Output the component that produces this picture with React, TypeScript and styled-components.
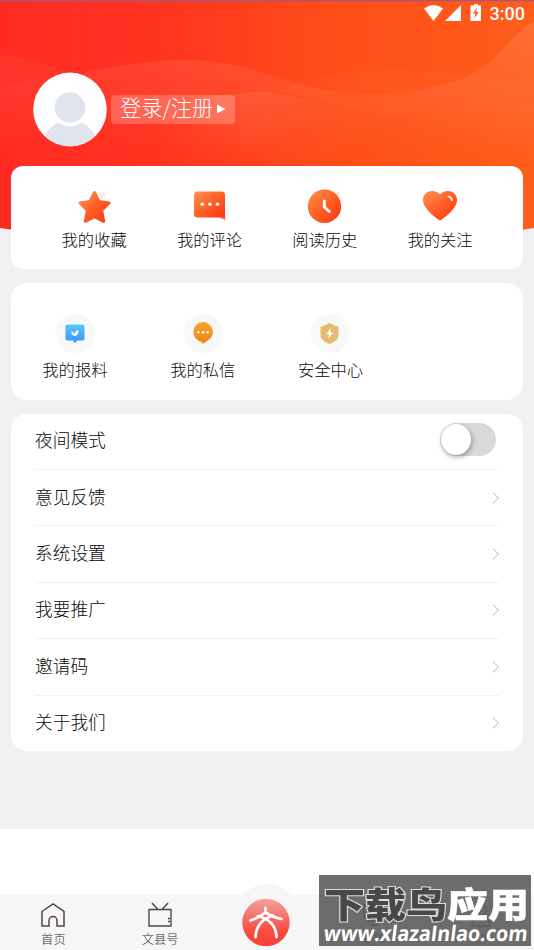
import React from "react";
import styled, { createGlobalStyle } from "styled-components";

const Global = createGlobalStyle`
  * { box-sizing: border-box; }
  body { margin: 0; background: #f1f1f1; font-family: "Noto Sans CJK SC", sans-serif; font-weight: 300; color: #080808; }
`;

const Screen = styled.div`
  position: relative;
  isolation: isolate;
  width: 534px;
  height: 950px;
  overflow: hidden;
  display: flex;
  flex-direction: column;
  background: #f1f1f1;
`;

const HeaderArt = styled.svg`
  position: absolute;
  top: 0;
  left: 0;
  z-index: -1;
`;

const StatusBar = styled.div`
  flex: none;
  height: 28px;
  padding-right: 9px;
  display: flex;
  align-items: center;
  justify-content: flex-end;
  color: #fff;
  font: 500 18px/28px Roboto, sans-serif;
`;

const StatusIcons = styled.svg`
  margin: 0 8px 2px 0;
`;

const Profile = styled.div`
  flex: none;
  height: 138px;
  padding: 44px 0 0 33px;
  display: flex;
  gap: 4px;
  align-items: flex-start;
`;

const LoginButton = styled.button`
  margin: 23px 0 0;
  width: 124px;
  height: 29px;
  border: 0;
  border-radius: 4px;
  padding: 0 0 5px 9px;
  display: flex;
  align-items: center;
  gap: 4px;
  background: rgba(255, 255, 255, 0.22);
  color: #fff;
  font: 300 21.2px/24px "Noto Sans CJK SC", sans-serif;
  white-space: nowrap;
  svg { margin-top: 4px; }
`;

const Card = styled.section<{ $height: number; $gap: number; $radius: number }>`
  flex: none;
  height: ${(p) => p.$height}px;
  margin: 0 11px ${(p) => p.$gap}px;
  border-radius: ${(p) => p.$radius}px;
  background: #fff;
`;

const Shortcuts = styled.div<{ $cell: number; $top: number; $left: number; $icon: number }>`
  display: grid;
  grid-auto-flow: column;
  grid-auto-columns: ${(p) => p.$cell}px;
  grid-template-rows: ${(p) => p.$icon}px 24px;
  padding: ${(p) => p.$top}px 0 0 ${(p) => p.$left}px;
  justify-items: center;
`;

const Shortcut = styled.div`
  display: grid;
  grid-row: span 2;
  grid-template-rows: subgrid;
  justify-items: center;
  font-size: 16.3px;
  line-height: 24px;
  white-space: nowrap;
`;

const MenuRow = styled.div`
  height: 56.4px;
  margin: 0 24px;
  padding-bottom: 4px;
  display: flex;
  align-items: center;
  justify-content: space-between;
  font-size: 17.7px;
  &:first-child { height: 55.5px; }
  & + & { border-top: 1px solid #f0f0f0; }
`;

const Toggle = styled.span`
  width: 56px;
  height: 33px;
  margin: 1px 3px 0 0;
  padding: 1px;
  border-radius: 17px;
  background: #d9d9d9;
`;

const Knob = styled.span`
  display: block;
  width: 30px;
  height: 31px;
  border-radius: 50%;
  background: #fff;
  box-shadow: 1px 2px 5px rgba(0, 0, 0, 0.35);
`;

const Chevron = styled.svg`
  margin: 4px -1px 0 0;
`;

const Footer = styled.footer`
  flex: none;
  margin-top: auto;
  height: 121px;
  padding-top: 66px;
  background: #fff;
`;

const TabBar = styled.nav`
  height: 55px;
  display: grid;
  grid-template-columns: repeat(5, 1fr);
  background: #f6f6f6;
`;

const Tab = styled.div<{ $active?: boolean }>`
  display: flex;
  flex-direction: column;
  align-items: center;
  padding-top: 6px;
  color: ${(p) => (p.$active ? "#d33a3a" : "#333")};
  font-size: 12.3px;
  line-height: 17px;
  svg { margin-bottom: 2px; }
`;

const CenterTab = styled.div`
  width: 64px;
  height: 66px;
  margin: -11px auto 0;
  border-radius: 32px 32px 0 0;
  background: #f6f6f6;
  display: flex;
  justify-content: center;
  align-items: flex-start;
  padding: 14px 2px 0 0;
  svg { flex: none; }
`;

const Watermark = styled.aside`
  position: absolute;
  left: 319px;
  top: 875px;
  width: 212px;
  height: 71px;
  padding: 7px 0 0 5px;
  background: rgba(91, 91, 91, 0.89);
  color: #fff;
  white-space: nowrap;
`;

const Brand = styled.div`
  height: 41px;
  font: 900 41px/41px "Noto Sans CJK SC", sans-serif;
  transform: scaleY(0.87);
  -webkit-text-stroke: 0.5px #fff;
`;

const DarkBrand = styled.span`
  color: #484848;
  -webkit-text-stroke: 2.5px #ddd;
  paint-order: stroke fill;
`;

const Site = styled.div`
  width: max-content;
  font: 700 19.7px/20px "Open Sans", sans-serif;
  transform: skewX(-7deg) scaleY(1.08);
`;

const grad = "url(#flame)";

const Flame = () => (
  <defs>
    <linearGradient id="flame" x1="0" y1="0" x2="1" y2="1">
      <stop offset="0" stopColor="#ff914f" />
      <stop offset=".55" stopColor="#ff5a22" />
      <stop offset="1" stopColor="#ff3412" />
    </linearGradient>
  </defs>
);

const StarIcon = () => (
  <svg width="40" height="40" viewBox="0 0 40 40">
    <Flame />
    <circle cx="28.500" cy="9" r="3" fill="#ffd6c6" opacity=".5" />
    <path d="M20.500 6.500l4.500 9 10 1.500-7.300 7.200 2 11.100-9.200-4.600-9.200 4.600 2-11.100L6 17l10-1.500z" fill={grad} stroke={grad} strokeWidth="3" strokeLinejoin="round" />
  </svg>
);
const CommentIcon = () => (
  <svg width="40" height="40" viewBox="0 0 40 40">
    <path d="M30 31h6.500v4z" fill="#ffa58c" />
    <path d="M8.500 5.500h24q3.500 0 3.500 3.500v23.500l-4-1H8.500Q5 31.500 5 28V9q0-3.500 3.500-3.500z" fill={grad} />
    <g fill="#fff"><circle cx="13.300" cy="18.200" r="1.800" /><circle cx="21" cy="18.200" r="1.800" /><circle cx="28.500" cy="18.200" r="1.800" /></g>
  </svg>
);
const ClockIcon = () => (
  <svg width="40" height="40" viewBox="0 0 40 40">
    <circle cx="33" cy="8" r="2" fill="#ffe0d3" />
    <circle cx="19.500" cy="20.300" r="16.700" fill={grad} />
    <path d="M19.300 15v6l5 4.500" fill="none" stroke="#fff" strokeWidth="3" strokeLinecap="round" strokeLinejoin="round" />
  </svg>
);
const HeartIcon = () => (
  <svg width="40" height="40" viewBox="0 0 40 40">
    <path d="M20 34.500C13 30 3 22 3 14 3 4.500 14.500 2 20 8.500 25.500 2 37 4.500 37 14 37 22 27 30 20 34.500z" fill={grad} />
    <path d="M28.500 10.500q3 .8 3.500 3.500" fill="none" stroke="#fff" strokeWidth="1.800" strokeLinecap="round" />
  </svg>
);

const ReportIcon = () => (
  <svg width="40" height="40" viewBox="0 0 40 40">
    <defs><linearGradient id="sky" x2="0" y2="1"><stop stopColor="#59c6ff" /><stop offset="1" stopColor="#3b91fb" /></linearGradient></defs>
    <circle cx="20" cy="19.500" r="19.500" fill="#f8f8f8" />
    <path d="M12.500 10.500h15q2 0 2 2v12q0 2-2 2H22l-2 2.700-2-2.700h-5.500q-2 0-2-2v-12q0-2 2-2z" fill="url(#sky)" />
    <path d="M19.500 22c-2-.5-3.300-2-3.200-4.500 2 .2 3.200 1.500 3.200 4.500zM19.500 22c-.2-3 1-5.500 3.800-6 .8 3-.8 5.800-3.800 6z" fill="#fff" />
  </svg>
);
const MessageIcon = () => (
  <svg width="40" height="40" viewBox="0 0 40 40">
    <defs><linearGradient id="amber" x2="0" y2="1"><stop stopColor="#f5a42c" /><stop offset="1" stopColor="#ee8410" /></linearGradient></defs>
    <circle cx="20" cy="19.500" r="19.500" fill="#f8f8f8" />
    <path d="M20 8a10 10 0 0 1 3.500 19.300L19.700 30l-.7-2.100A10 10 0 0 1 20 8z" fill="url(#amber)" />
    <g fill="#fff"><circle cx="15.300" cy="18.200" r="1.200" /><circle cx="20" cy="18.200" r="1.200" /><circle cx="24.700" cy="18.200" r="1.200" /></g>
  </svg>
);
const ShieldIcon = () => (
  <svg width="40" height="40" viewBox="0 0 40 40">
    <circle cx="20" cy="19.500" r="19.500" fill="#f8f8f8" />
    <path d="M19.500 9l9 4v8.500c0 4-4.500 6.500-9 8.500-4.500-2-9-4.500-9-8.500V13z" fill="#e5bd70" />
    <path d="M20.500 14l-4 6.200H19l-.7 4.800 4.700-6.500h-2.600z" fill="#fff" />
  </svg>
);

const mainShortcuts = [
  ["我的收藏", StarIcon], ["我的评论", CommentIcon], ["阅读历史", ClockIcon], ["我的关注", HeartIcon],
] as const;
const extraShortcuts = [
  ["我的报料", ReportIcon], ["我的私信", MessageIcon], ["安全中心", ShieldIcon],
] as const;
const menu = ["意见反馈", "系统设置", "我要推广", "邀请码", "关于我们"];

export default function App() {
  return (
    <Screen>
      <Global />
      <HeaderArt width="534" height="250" viewBox="0 0 534 250">
        <defs>
          <linearGradient id="sunset"><stop stopColor="#ff2b23" /><stop offset=".28" stopColor="#ff331f" /><stop offset=".65" stopColor="#ff4f18" /><stop offset="1" stopColor="#ff5d1b" /></linearGradient>
          <linearGradient id="wave" x2="0" y2="1"><stop stopColor="#fff" stopOpacity=".11" /><stop offset="1" stopColor="#fff" stopOpacity="0" /></linearGradient>
          <linearGradient id="crest"><stop stopColor="#ff6a50" stopOpacity="0" /><stop offset=".25" stopColor="#ff6a50" stopOpacity=".5" /><stop offset=".6" stopColor="#ff6a35" stopOpacity=".1" /><stop offset="1" stopColor="#ff7a45" stopOpacity=".35" /></linearGradient>
          <linearGradient id="fade" x2="0" y2="1"><stop stopColor="#fff" /><stop offset="1" stopColor="#000" /></linearGradient>
          <mask id="soften" maskUnits="userSpaceOnUse" x="150" y="85" width="384" height="85"><rect x="150" y="85" width="384" height="80" fill="url(#fade)" /></mask>
        </defs>
        <path d="M0 0h534v228q-267 40-534 0z" fill="url(#sunset)" />
        <path d="M0 86C70 80 120 60 184 60c55 0 80 15 130 28 50 10 105 8 150-10C500 62 505 38 534 22V150H0z" fill="url(#wave)" />
        <path d="M0 55q45 4 70 20Q40 84 0 86z" fill="#fff" opacity=".04" />
        <path d="M150 110Q215 92 268 92c50 7 90 27 150 27 55 0 80-8 116-17v68H150z" fill="url(#crest)" mask="url(#soften)" />
        <path d="M300 82q50-14 105-12 70 6 129 11v20q-50 17-116 17C360 118 320 97 280 92z" fill="#fff" opacity=".025" />
        <rect width="534" height="1.300" fill="#a95778" />
      </HeaderArt>

      <StatusBar>
        <StatusIcons width="58" height="18" viewBox="0 0 58 18" fill="#fff">
          <path d="M0 4.500Q9.500-2.500 19 4.500L9.500 17z" />
          <path d="M37 1v16H21z" />
          <path fillRule="evenodd" d="M50 0h4v1.500h3V17H46.500V1.500H50zM53 3.500l-4 6h2.300l-.8 5 4.200-6.500h-2.500z" />
        </StatusIcons>
        3:00
      </StatusBar>

      <Profile>
        <svg width="74" height="75" viewBox="0 0 74 75">
          <clipPath id="face"><circle cx="37" cy="37.400" r="36.800" /></clipPath>
          <circle cx="37" cy="37.400" r="36.800" fill="#fff" />
          <g clipPath="url(#face)" fill="#e0e4ed">
            <circle cx="37" cy="35.500" r="15.300" />
            <path d="M12 63q5-8 13-12.500 12 8 24 0Q57 55 62 63v12H12z" />
          </g>
        </svg>
        <LoginButton>
          登录/注册
          <svg width="9" height="10" viewBox="0 0 9 10"><path d="M0 .5l8.700 4.500L0 9.500z" fill="#fff" /></svg>
        </LoginButton>
      </Profile>

      <Card $height={103} $gap={14} $radius={12}>
        <Shortcuts $cell={115.3} $top={20} $left={25.500} $icon={41}>
          {mainShortcuts.map(([label, Icon]) => <Shortcut key={label}><Icon />{label}</Shortcut>)}
        </Shortcuts>
      </Card>

      <Card $height={117} $gap={13.500} $radius={16}>
        <Shortcuts $cell={127.8} $top={31} $left={0} $icon={43}>
          {extraShortcuts.map(([label, Icon]) => <Shortcut key={label}><Icon />{label}</Shortcut>)}
        </Shortcuts>
      </Card>

      <Card $height={337.500} $gap={0} $radius={16}>
        <MenuRow>夜间模式<Toggle><Knob /></Toggle></MenuRow>
        {menu.map((label) => (
          <MenuRow key={label}>
            {label}
            <Chevron width="8" height="12" viewBox="0 0 8 12"><path d="M1 .8L6.500 6 1 11.200" fill="none" stroke="#b5b5b5" /></Chevron>
          </MenuRow>
        ))}
      </Card>

      <Footer>
        <TabBar>
          <Tab>
            <svg width="26" height="28" viewBox="0 0 26 28"><path d="M2 10.500L13 3l11 7.500V25h-7v-5.500a4 4 0 0 0-8 0V25H2z" fill="none" stroke="#524645" strokeWidth="1.500" /></svg>
            首页
          </Tab>
          <Tab>
            <svg width="26" height="28" viewBox="0 0 26 28"><path d="M2 8.500h22V25H2zM5 2l6 6.500M21 2l-6 6.500M21 17.500h2M21 20.500h2" fill="none" stroke="#524645" strokeWidth="1.400" /></svg>
            文县号
          </Tab>
          <CenterTab>
            <svg width="48" height="48" viewBox="0 0 48 48">
              <defs><linearGradient id="badge" x2="0" y2="1"><stop stopColor="#f5a09c" /><stop offset=".65" stopColor="#f84f45" /><stop offset="1" stopColor="#f64035" /></linearGradient></defs>
              <circle cx="24" cy="24.500" r="23.700" fill="url(#badge)" />
              <path d="M23.500 10v4M8.500 22.500Q18 19 23.500 14.500 30 19 39.500 21M16 18C24 20 34 25 34.500 39M31 17.500C22 20 14 27 13.500 39" fill="none" stroke="#fff" strokeWidth="2.800" strokeLinecap="round" />
            </svg>
          </CenterTab>
          <Tab>
            <svg width="26" height="28" viewBox="0 0 26 28"><path d="M3 4h20v12H3zM6 20h14M9 24h8" fill="none" stroke="#333" strokeWidth="1.500" /></svg>
            矩阵
          </Tab>
          <Tab $active>
            <svg width="26" height="28" viewBox="0 0 26 28"><path d="M8 9a5 5 0 1 1 10 0 5 5 0 0 1-10 0M4 25q0-9 9-9t9 9z" fill="none" stroke="#d33a3a" strokeWidth="1.500" /></svg>
            我的
          </Tab>
        </TabBar>
      </Footer>

      <Watermark>
        <Brand><DarkBrand>下载鸟</DarkBrand>应用</Brand>
        <Site>www.xlazaInlao.com</Site>
      </Watermark>
    </Screen>
  );
}
